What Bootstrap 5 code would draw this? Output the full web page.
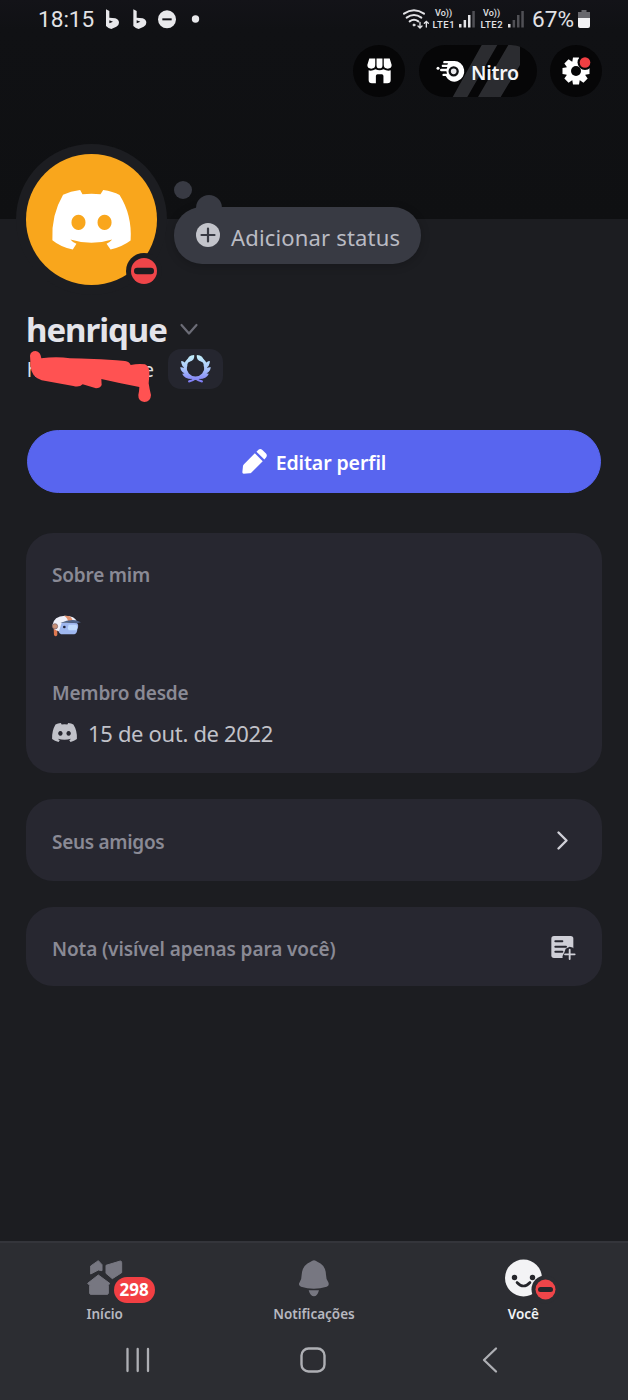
<!DOCTYPE html>
<html lang="pt-BR" data-bs-theme="dark">
<head>
<meta charset="utf-8">
<meta name="viewport" content="width=device-width, initial-scale=1">
<title>Perfil</title>
<link href="https://cdn.jsdelivr.net/npm/bootstrap@5.3.0/dist/css/bootstrap.min.css" rel="stylesheet">
<style>
body{background:#1c1d21;font-family:"Noto Sans",sans-serif;color:#e3e4e8}
svg{display:block;flex:none;overflow:visible}
.screen{width:628px;height:1400px}
.banner{height:219px;background:linear-gradient(#131318,#101114 30px,#0f1012)}
.statusbar{height:38px;padding-left:38px;padding-right:38px;font-family:Roboto,sans-serif;font-size:22.6px;line-height:38px;color:#e2e2e5}
.volte{font-weight:500;text-align:center;width:23px}
.volte span{display:block;white-space:nowrap;font-size:9px;line-height:11px}
.volte span+span{font-size:9.5px;line-height:11px;letter-spacing:.6px;margin-right:-.6px}
.toolbar{margin-top:7px;padding-right:26px;gap:13px}
.round-btn{width:52px;height:52px;background:#060607;border-radius:50%}
.nitro{width:118px;height:52px;border-radius:26px;background:#060607;padding-left:17px;font-size:19.5px;letter-spacing:-.25px;font-weight:600;color:#f5f5f7;overflow:hidden;margin-left:1px}
.profile-top{margin-top:-75px;height:151px;padding-left:16px}
.ring{width:151px;height:151px;border-radius:50%;background:#1c1d21;padding:10px}
.face{width:131px;height:131px;border-radius:50%;background:#f9a61c}
.presence{right:4px;bottom:5px}
.bubble{width:247px;height:57px;margin:63px 0 0 7px;border-radius:28px;background:#383a43;padding-left:22px;gap:11px;font-size:22px;letter-spacing:.17px;color:#babbc3;box-shadow:0 2px 10px #0003}
.bubble .dots{left:0;top:-27px}
.display-line{margin-top:14px;height:42px;padding-left:26px;font-size:33px;line-height:42px;letter-spacing:-1.05px;font-weight:700;color:#e4e4ea;gap:13px}
.handle-line{margin-top:-2px;height:40px;padding-left:27px}
.handle{width:127px;font-size:19px;color:#dfe0e4}
.handle span{margin-top:2px}
.badge-box{width:55px;height:40px;border-radius:13px;background:#25262f;margin-left:14px}
.edit-btn{--bs-btn-bg:#5865ef;--bs-btn-border-color:#5865ef;--bs-btn-color:#fff;margin:41px 27px 0;height:63px;font-size:19.5px;letter-spacing:-.1px;font-weight:600;gap:9px}
.panel{margin:0 26px;background:#272730;border-radius:27px;padding:0 26px;font-size:19px;letter-spacing:-.1px;font-weight:600;color:#8a8a95}
.panel.about{margin-top:40px;height:240px;padding-top:29px}
.panel .lbl{line-height:26px;letter-spacing:-.2px}
.panel .since{font-size:22px;font-weight:400;color:#c1c2c9;gap:11px;line-height:30px;letter-spacing:-.33px}
.bottom{height:159px;background:#2c2d32;border-top:2px solid #34353b;font-size:13.5px;font-weight:600;color:#b7b8c0}
.tab-item{width:33.3333%;padding-top:17px}
.tab-item .lab{line-height:18px;margin-top:8px}
.tab-icon{height:37px}
.count{left:27px;top:17px;width:41px;height:26px;border-radius:14px;background:#f23f43;color:#fff;font-size:17px;font-weight:700;line-height:26px;text-align:center}
.sysnav{margin-top:24px;padding-left:125px}
</style>
<script src="https://cdn.jsdelivr.net/npm/bootstrap@5.3.0/dist/js/bootstrap.bundle.min.js"></script>
</head>
<body>
<div class="screen d-flex flex-column overflow-hidden">
  <header class="banner flex-shrink-0">
    <div class="statusbar d-flex align-items-center">
      <span style="margin-top:1px">18:15</span>
      <svg width="62" height="20" viewBox="255 26 186 60" style="margin-left:11px" fill="#e8e8eb">
        <path d="M258 27l10 5v20l18 2q11 4 11 13 0 8-8 12l-15 7q-7 0-16-9zM268 60v9l11-5z" fill-rule="evenodd"/>
        <path d="M340 27l10 5v20l18 2q11 4 11 13 0 8-8 12l-15 7q-7 0-16-9zM350 60v9l11-5z" fill-rule="evenodd"/>
        <circle cx="441" cy="57" r="27"/><path d="M427 57h28" stroke="#121217" stroke-width="6"/>
      </svg>
      <svg width="8" height="8" style="margin-left:25px"><circle cx="3.5" cy="4" r="3.7" fill="#e8e8eb"/></svg>
      <div class="d-flex align-items-center ms-auto">
        <svg width="27" height="20" viewBox="38 26 81 60" fill="none" stroke="#e2e2e5" stroke-width="6" stroke-linecap="round">
          <path d="M41 40q30-20 60 0M49 52q22-16 44 0M58 63q13-9 26 0"/><circle cx="71" cy="74" r="3" fill="#e2e2e5" stroke-width="3"/>
          <path d="M89 66v17m-6-6l6 6 6-6M108 80V63m-6 6l6-6 6 6" stroke-width="4"/>
        </svg>
        <div class="volte" style="margin-left:2px"><span>Vo))</span><span>LTE1</span></div>
        <svg width="16" height="18" style="margin-left:4px" fill="#e2e2e5"><path d="M0 14h2.500v3.500H0zM4.600 10h2.500v7.500H4.600zM9 5h2.500v12.500H9z"/><path d="M13.300 1h2.500v16.500h-2.500z" fill="#505055"/></svg>
        <div class="volte" style="margin-left:5px"><span>Vo))</span><span>LTE2</span></div>
        <svg width="16" height="18" style="margin-left:5px" fill="#505055"><path d="M0 14h2.500v3.500H0z" fill="#e2e2e5"/><path d="M4.600 10h2.500v7.500H4.600zM9 5h2.500v12.500H9zM13.300 1h2.500v16.500h-2.500z"/></svg>
        <span style="margin:1px 0 0 8px">67%</span>
        <svg width="12" height="18" style="margin-left:4px"><path d="M3.500 0h5v2H12v6H0V2h3.500z" fill="#68686d"/><path d="M0 8h12v8q0 2-2 2H2q-2 0-2-2z" fill="#f2f2f4"/></svg>
      </div>
    </div>
    <div class="toolbar d-flex justify-content-end">
      <div class="round-btn d-flex align-items-center justify-content-center">
        <svg width="25" height="26" viewBox="80 68 76 78" fill="#fff"><path d="M87 69h18v20a10 9 0 0 1-24 0zM109 69h18v21a9 9 0 0 1-18 0zM131 69h18l6 20a10 9 0 0 1-24 0z"/><path d="M85 105q9 3 21-3 12 6 24 0 12 6 22 3v29q0 10-10 10h-12v-22q0-5-5-5h-13q-5 0-5 5v22H95q-10 0-10-10z"/></svg>
      </div>
      <div class="nitro position-relative d-flex align-items-center">
        <svg class="position-absolute top-0 start-0" width="118" height="52" fill="#2b2c30"><path d="M62.700 0h15.600L48.300 52H33.700zM89.300 0H101v20L81.700 52H59z"/></svg>
        <svg class="position-relative" width="28" height="21" viewBox="289 74 84 63" fill="#fff"><path d="M314 74h29a29.500 31 0 1 1-25 45h-6a3.500 3.500 0 0 1-1-7h11l-2-7h-15a4 4 0 0 1 0-8h16l2-5h-15a4 4 0 0 1 0-7h15l2-4h-11a3.500 3.500 0 0 1 0-7z"/><circle cx="295" cy="96" r="4.500"/><circle cx="342" cy="105" r="12" fill="#e9e9ec" stroke="#101113" stroke-width="7"/></svg>
        <span class="position-relative" style="margin:3px 0 0 7px">Nitro</span>
      </div>
      <div class="round-btn d-flex align-items-center justify-content-center">
        <svg width="28" height="28" viewBox="-14 -14 28 28">
          <g fill="#fff"><circle r="10"/><path d="M-3-13.500h6l1 6h-8zM-3 13.500h6l1-6h-8z"/><path d="M-3-13.500h6l1 6h-8zM-3 13.500h6l1-6h-8z" transform="rotate(45)"/><path d="M-3-13.500h6l1 6h-8zM-3 13.500h6l1-6h-8z" transform="rotate(90)"/><path d="M-3-13.500h6l1 6h-8zM-3 13.500h6l1-6h-8z" transform="rotate(135)"/></g>
          <circle r="5" fill="#060607"/><circle cx="9" cy="-8.500" r="7.500" fill="#060607"/><circle cx="9" cy="-8.500" r="5.300" fill="#f23f43"/>
        </svg>
      </div>
    </div>
  </header>

  <section class="profile-top d-flex position-relative flex-shrink-0">
    <div class="ring position-relative flex-shrink-0">
      <div class="face d-flex align-items-center justify-content-center">
        <svg width="79" height="59.500" viewBox="0 0 236 178"><path fill="#fff" fill-rule="evenodd" d="M33 14Q55 4 84 0l7 13q27-4 54 0l8-13q29 4 49 15 38 60 33 136-25 19-60 27l-12-17q9-4 17-13-62 20-125 0 7 9 18 13l-11 17Q25 170 1 150-3 75 33 14zM79 74a21 23 0 1 0 .1 0zM157 74a21 23 0 1 0 .1 0z"/></svg>
      </div>
      <svg class="presence position-absolute" width="38" height="38" viewBox="-19 -19 38 38"><circle r="18" fill="#1c1d21"/><circle r="13" fill="#ef4549"/><rect x="-10" y="-3.200" width="20" height="6.400" rx="3.200" fill="#1c1d21"/></svg>
    </div>
    <div class="bubble position-relative d-flex align-items-center">
      <svg class="dots position-absolute" width="60" height="28" fill="#383a43"><circle cx="9" cy="10" r="9"/><path d="M22 28a13 13 0 1 1 26 0z"/></svg>
      <svg width="24" height="24" style="margin-top:-2px"><circle cx="12" cy="12" r="12" fill="#c3c4cb"/><path d="M12 5.500v13M5.500 12h13" stroke="#383a43" stroke-width="2.200" stroke-linecap="round"/></svg>
      <span style="margin-top:3px">Adicionar status</span>
    </div>
  </section>

  <div class="display-line d-flex align-items-center flex-shrink-0">
    <span>henrique</span>
    <svg width="18" height="11" style="margin-top:-2px" fill="none" stroke="#6b6c76" stroke-width="2.200" stroke-linecap="round" stroke-linejoin="round"><path d="M1.500 1l7.500 8.500L16.500 1"/></svg>
  </div>
  <div class="handle-line d-flex align-items-center flex-shrink-0">
    <div class="handle position-relative d-flex justify-content-between"><span>h</span><span>e</span>
      <svg class="position-absolute" style="left:1px;top:-4px" width="126" height="52" viewBox="54 135 378 156" fill="#ff5252"><path d="M60 152Q62 138 77 138Q92 140 94 160Q140 154 180 160Q240 160 345 168Q358 170 362 180Q385 175 405 178Q420 185 418 210L416 235Q418 250 423 270Q422 290 403 291Q384 288 385 270Q388 255 388 246Q330 235 274 222L275 240Q270 250 258 250L218 238Q208 248 190 243L95 226Q64 215 62 185Z"/></svg>
    </div>
    <div class="badge-box d-flex align-items-center justify-content-center">
      <svg width="31" height="28" viewBox="512 152 92 84">
        <defs><linearGradient id="wg" gradientUnits="userSpaceOnUse" x1="0" y1="152" x2="0" y2="234"><stop offset="0" stop-color="#c3f0fa"/><stop offset=".5" stop-color="#a9c5fb"/><stop offset="1" stop-color="#7d78f4"/></linearGradient></defs>
        <path d="M541 164A31 31 0 1 0 575 164" fill="none" stroke="url(#wg)" stroke-width="9"/>
        <path d="M539 231q8-1 19-9 11 8 19 9" fill="none" stroke="url(#wg)" stroke-width="7" stroke-linecap="round"/>
        <g fill="url(#wg)"><path d="M534 172q-1-20 20-20 3 16-14 20zM582 172q1-20-20-20-3 16 14 20zM534 184q-9-14-19-14-1 16 15 23zM582 184q9-14 19-14 1 16-15 23zM532 200q-9-13-20-11 2 17 22 22zM584 200q9-13 20-11-2 17-22 22zM541 213q-12-8-23-5 7 16 29 16zM575 213q12-8 23-5-7 16-29 16z"/></g>
      </svg>
    </div>
  </div>

  <button class="edit-btn btn rounded-pill d-flex align-items-center justify-content-center flex-shrink-0 p-0">
    <svg width="25" height="25" viewBox="68 86 76 76" fill="#fff"><path d="M112 94l6-6q6-4 12 1l11 11q5 6 0 12l-5 6zM107 99l24 24-35 35q-2 2-5 2l-18 1q-4 0-4-4l2-19q0-3 3-6z"/></svg>
    <span style="margin-top:2px">Editar perfil</span>
  </button>

  <section class="panel about flex-shrink-0">
    <div class="lbl">Sobre mim</div>
    <svg width="29" height="22" viewBox="96 269 87 66" style="margin-top:27px">
      <path d="M101 310h11v19q-5 8-10 0z" fill="#df7850"/>
      <path d="M113 292h57q8 6 2 20-1 14-9 15h-40q-13-8-10-35z" fill="#9fb8f0"/><path d="M146 298h23q6 9 0 17h-23q-5-8 0-17z" fill="#c0dcff"/>
      <path d="M97 300q4-28 38-29 30 0 36 18l-46 3-8 26q-16-2-20-18z" fill="#eef0fa"/>
      <path d="M132 271q12 7 12 18l14-2q-2-12-12-15z" fill="#e1906c"/>
      <path d="M121 293q25-11 46-8l16 6-13 3q-28-4-49-1z" fill="#4d6389"/>
      <circle cx="105" cy="303" r="8" fill="#c89076" stroke="#765b60" stroke-width="2"/><circle cx="133" cy="305" r="4" fill="#20263e"/>
    </svg>
    <div class="lbl" style="margin-top:43px">Membro desde</div>
    <div class="since d-flex align-items-center" style="margin-top:12px">
      <svg width="25" height="19" viewBox="0 0 236 178" preserveAspectRatio="none" style="margin-top:-2px"><path fill="#c1c2c9" fill-rule="evenodd" d="M33 14Q55 4 84 0l7 13q27-4 54 0l8-13q29 4 49 15 38 60 33 136-25 19-60 27l-12-17q9-4 17-13-62 20-125 0 7 9 18 13l-11 17Q25 170 1 150-3 75 33 14zM79 74a21 23 0 1 0 .1 0zM157 74a21 23 0 1 0 .1 0z"/></svg>
      <span>15 de out. de 2022</span>
    </div>
  </section>
  <section class="panel d-flex align-items-center justify-content-between flex-shrink-0" style="margin-top:26px;height:82px">
    <span style="margin-top:4px;letter-spacing:-.3px">Seus amigos</span>
    <svg width="11" height="19" style="margin-right:8px" fill="none" stroke="#d0d0d8" stroke-width="2.400" stroke-linecap="round" stroke-linejoin="round"><path d="M1.500 1.500l8 8-8 8"/></svg>
  </section>
  <section class="panel d-flex align-items-center justify-content-between flex-shrink-0" style="margin-top:26px;height:79px">
    <span style="margin-top:5px">Nota (visível apenas para você)</span>
    <svg width="25" height="24" viewBox="154 528 75 72" style="margin-top:2px"><rect x="155" y="528" width="66" height="66" rx="8" fill="#cfcfd7"/><path d="M167 544h21M167 560h32M167 575h21" stroke="#272730" stroke-width="6" stroke-linecap="round"/><path d="M210 560q19 2 22 24v16h-36q-10-5-7-13 6-10 9-21z" fill="#272730"/><path d="M210 569v28M196 583h29" stroke="#cfcfd7" stroke-width="5.500" stroke-linecap="round"/></svg>
  </section>

  <nav class="bottom mt-auto flex-shrink-0">
    <div class="d-flex">
      <div class="tab-item d-flex flex-column align-items-center">
        <div class="tab-icon position-relative">
          <svg width="36" height="36" viewBox="80 80 108 108" fill="#777781" stroke="#777781" stroke-width="3" stroke-linejoin="round"><path d="M91 98L114 82L125 94V112L114 110L91 122Z"/><path d="M137 96L180 83Q184 83 184 88V118L156 136L137 120Z"/><path d="M82 150L114 125L148 150L144 156V180Q144 183 140 183H92Q88 183 88 180V156Z"/></svg>
          <span class="count position-absolute">298</span>
        </div>
        <span class="lab">Início</span>
      </div>
      <div class="tab-item d-flex flex-column align-items-center">
        <div class="tab-icon"><svg width="30" height="37" viewBox="718 77 90 111" fill="#777781"><path d="M753 82q10-9 20 0 25 10 26 39 0 14 7 23 4 10-5 13-39 12-77 0-10-5-4-13 6-9 6-23 2-29 27-39zM747 168h31q-5 18-15 18-11 0-16-18z"/></svg></div>
        <span class="lab">Notificações</span>
      </div>
      <div class="tab-item d-flex flex-column align-items-center" style="color:#f2f3f5">
        <div class="tab-icon position-relative">
          <svg width="37" height="37"><circle cx="18.500" cy="18" r="18.500" fill="#f3f3f5"/><g fill="#25262b"><circle cx="9.500" cy="17.500" r="2.700"/><circle cx="27.500" cy="17.500" r="2.700"/></g><path d="M12 22.500q6.500 7 13 0" fill="none" stroke="#25262b" stroke-width="2.600" stroke-linecap="round"/></svg>
          <svg class="position-absolute" style="left:26px;top:15px" width="29" height="29" viewBox="-14.500 -14.500 29 29"><circle r="14" fill="#2c2d32"/><circle r="10" fill="#ef4549"/><rect x="-7.500" y="-2.500" width="15" height="5" rx="2.500" fill="#25262b"/></svg>
        </div>
        <span class="lab">Você</span>
      </div>
    </div>
    <div class="sysnav d-flex align-items-center">
      <svg width="26" height="26" stroke="#aeafb4" stroke-width="2.300" stroke-linecap="round"><path d="M2.500 2v22M12.700 2v22M23 2v22"/></svg>
      <svg width="26" height="26" style="margin-left:149px" fill="none" stroke="#aeafb4" stroke-width="2.400"><rect x="1.500" y="1.500" width="23" height="23" rx="7"/></svg>
      <svg width="16" height="26" style="margin-left:156px" fill="none" stroke="#aeafb4" stroke-width="2.300" stroke-linecap="round" stroke-linejoin="round"><path d="M14 1.500L2 13l12 11.500"/></svg>
    </div>
  </nav>
</div>
</body>
</html>
